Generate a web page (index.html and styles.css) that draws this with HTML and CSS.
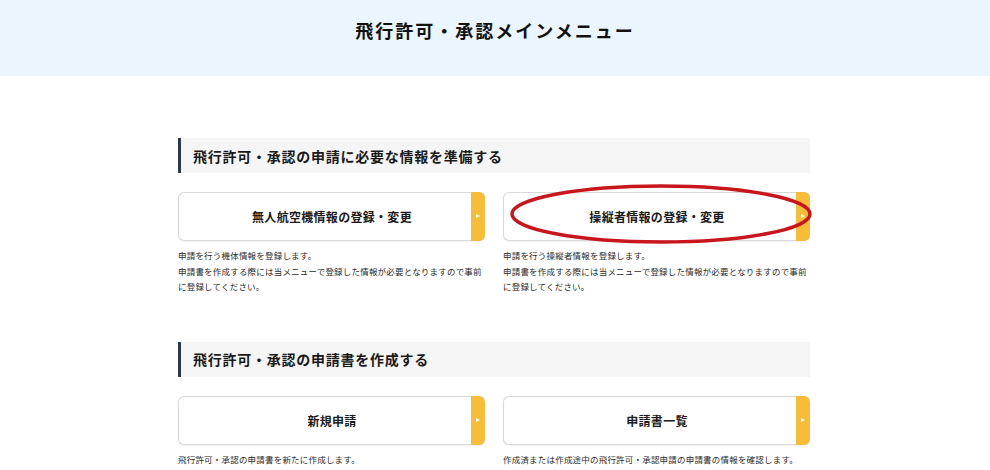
FILE: index.html
```html
<!DOCTYPE html>
<html lang="ja">
<head>
    <meta charset="UTF-8">
    <meta name="viewport" content="width=device-width, initial-scale=1.0">
    <title>飛行許可・承認メインメニュー</title>
    <link rel="stylesheet" href="styles.css">
</head>
<body>
    <!-- Page Header -->
    <header class="page-header">
        <h1>飛行許可・承認メインメニュー</h1>
    </header>

    <main class="menu">
        <!-- Prepare information -->
        <section class="menu-section">
            <h2 class="section-title">飛行許可・承認の申請に必要な情報を準備する</h2>
            <div class="card-grid">
                <div class="card-item">
                    <a class="card-button" href="#">無人航空機情報の登録・変更</a>
                    <p class="card-desc">申請を行う機体情報を登録します。<br>申請書を作成する際には当メニューで登録した情報が必要となりますので事前<br>に登録してください。</p>
                </div>
                <div class="card-item">
                    <a class="card-button" href="#">操縦者情報の登録・変更</a>
                    <svg class="mark" viewBox="0 0 304 62" aria-hidden="true">
                        <ellipse cx="152" cy="31" rx="149" ry="28" />
                    </svg>
                    <p class="card-desc">申請を行う操縦者情報を登録します。<br>申請書を作成する際には当メニューで登録した情報が必要となりますので事前<br>に登録してください。</p>
                </div>
            </div>
        </section>

        <!-- Create application -->
        <section class="menu-section">
            <h2 class="section-title">飛行許可・承認の申請書を作成する</h2>
            <div class="card-grid">
                <div class="card-item">
                    <a class="card-button" href="#">新規申請</a>
                    <p class="card-desc">飛行許可・承認の申請書を新たに作成します。</p>
                </div>
                <div class="card-item">
                    <a class="card-button" href="#">申請書一覧</a>
                    <p class="card-desc">作成済または作成途中の飛行許可・承認申請の申請書の情報を確認します。</p>
                </div>
            </div>
        </section>
    </main>
</body>
</html>
```

FILE: styles.css
```css
body {
    margin: 0;
    font-family: "Noto Sans CJK JP", "Noto Sans", sans-serif;
    color: #222;
    background: #ffffff;
}

/* Header band */
.page-header {
    background: #eaf5fd;
    height: 76px;
    padding-top: 17px;
    box-sizing: border-box;
}
.page-header h1 {
    margin: 0;
    text-align: center;
    font-size: 18px;
    line-height: 26px;
    letter-spacing: 2px;
    font-weight: bold;
    color: #111;
}

/* Menu body */
.menu {
    width: 632px;
    margin: 0 auto;
    padding: 62px 2px 0 0;
}
.menu-section {
    margin-bottom: 47px;
}
.section-title {
    margin: 0 0 19px;
    height: 35px;
    padding-left: 12px;
    display: flex;
    align-items: center;
    background: #f5f5f5;
    border-left: 3px solid #2c3b4c;
    font-size: 14px;
    letter-spacing: 0.75px;
    font-weight: bold;
    color: #1a1a1a;
}

.card-grid {
    display: grid;
    grid-template-columns: 1fr 1fr;
    column-gap: 18px;
}
.card-item {
    position: relative;
}
.card-button {
    position: relative;
    display: flex;
    align-items: center;
    justify-content: center;
    height: 49px;
    box-sizing: border-box;
    background: #fff;
    border: 1px solid #d9d9d9;
    border-right: none;
    border-radius: 6px;
    box-shadow: 0 1px 2px rgba(0, 0, 0, 0.06);
    font-size: 12px;
    letter-spacing: 0.3px;
    font-weight: bold;
    color: #1a1a1a;
    text-decoration: none;
}
/* Yellow arrow tab */
.card-button::after {
    content: "";
    position: absolute;
    top: -1px;
    right: 0;
    bottom: -1px;
    width: 14px;
    background: #f7bd37;
    border-radius: 0 6px 6px 0;
}
.card-button::before {
    content: "";
    position: absolute;
    right: 5px;
    top: 50%;
    margin-top: -2.5px;
    border-left: 4px solid #fff;
    border-top: 2.5px solid transparent;
    border-bottom: 2.5px solid transparent;
    z-index: 1;
}

.card-desc {
    margin: 7px 0 0;
    font-size: 8.5px;
    line-height: 15.5px;
    letter-spacing: 0.2px;
    color: #2a2a2a;
}

/* Red marker drawn over the operator card */
.mark {
    position: absolute;
    left: 6px;
    top: -9px;
    width: 304px;
    height: 62px;
    overflow: visible;
    pointer-events: none;
}
.mark ellipse {
    fill: none;
    stroke: #c8161d;
    stroke-width: 3.5;
}
```
